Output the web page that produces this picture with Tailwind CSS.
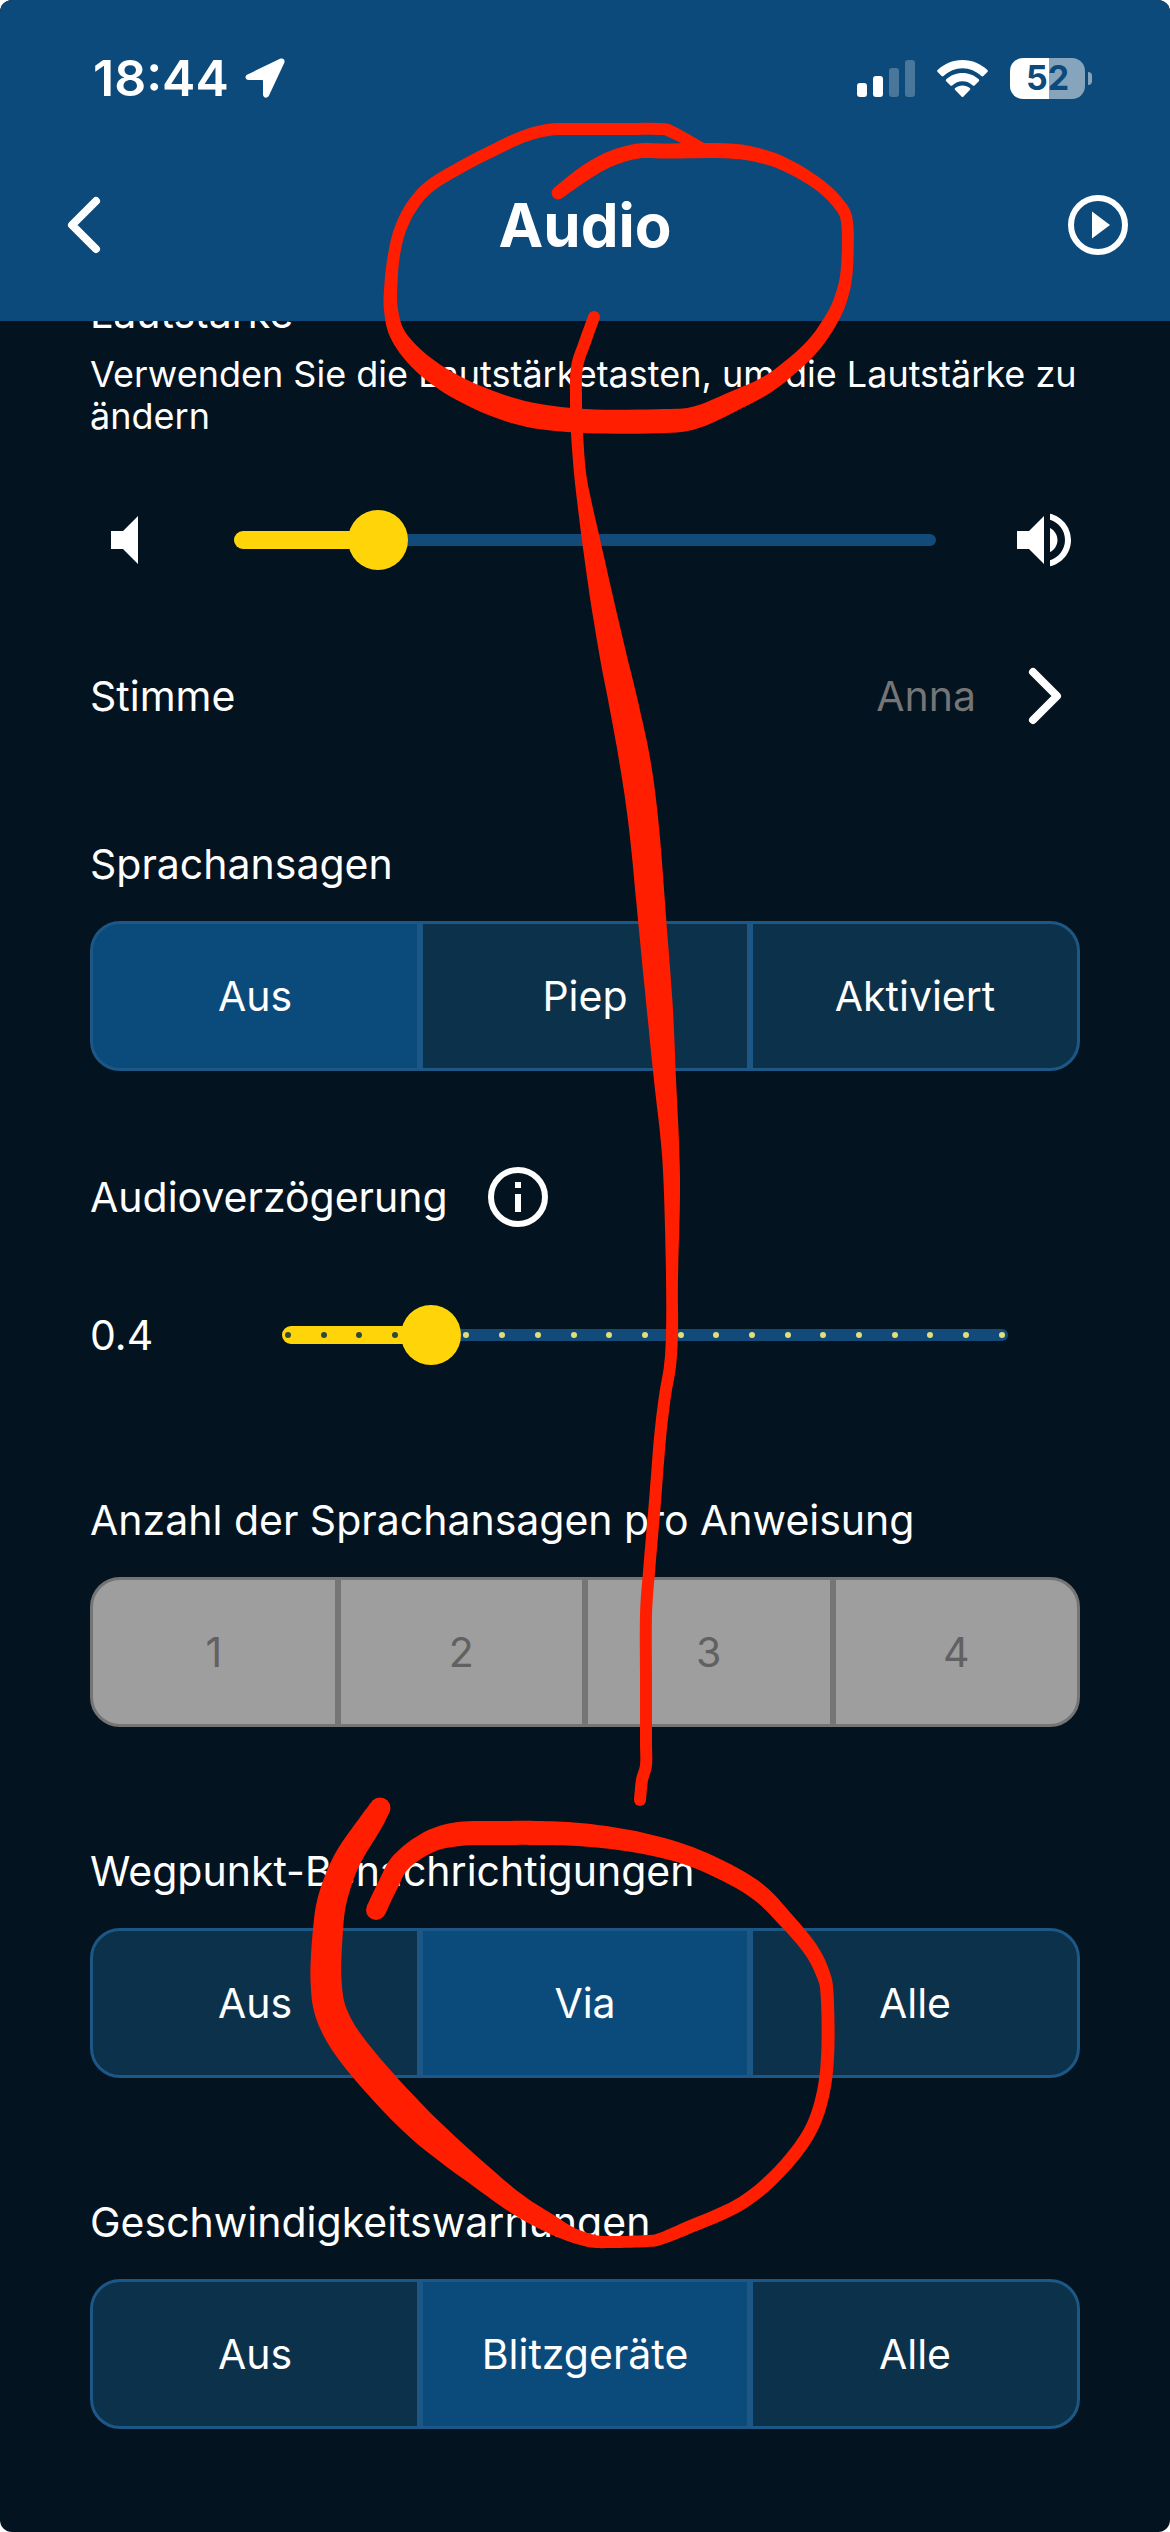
<!DOCTYPE html>
<html lang="de">
<head>
    <meta charset="UTF-8">
    <meta name="viewport" content="width=device-width, initial-scale=1.0">
    <title>Audio</title>
    <script src="https://cdn.jsdelivr.net/npm/@tailwindcss/browser@4"></script>
</head>
<body class="bg-white">
    <div class="relative min-h-screen overflow-hidden rounded-xl bg-[#03131f] font-['Inter',sans-serif] text-[41px] leading-[48px] text-white">

        <header class="relative z-10 bg-[#0b4a7a] pb-[27px]">
            <!-- Status bar -->
            <div class="flex h-[156px] items-center justify-between pr-[78px] pl-[93px]">
                <div class="flex items-center gap-4">
                    <span class="text-[50px] font-semibold">18:44</span>
                    <svg class="size-10" viewBox="0 0 40 40" fill="currentColor" aria-hidden="true">
                        <path d="M35 .8 2.500 16.500C-.8 18.200.2 22 3.800 22H17q1 0 1 1v13.500c0 3.600 4.500 4.300 6 1L39.200 5C40.600 1.800 38-.6 35 .8Z"/>
                    </svg>
                </div>
                <div class="flex items-center gap-[22px]">
                    <svg class="h-[38px] w-[58px]" viewBox="0 0 58 38" fill="currentColor" aria-hidden="true">
                        <rect x="0" y="24" width="10" height="14" rx="3"/>
                        <rect x="16" y="17" width="10" height="21" rx="3"/>
                        <rect x="32" y="9" width="10" height="29" rx="3" opacity=".25"/>
                        <rect x="48" y="1" width="10" height="37" rx="3" opacity=".25"/>
                    </svg>
                    <svg class="h-[38px] w-[51px]" viewBox="0 0 51 38" fill="currentColor" aria-hidden="true">
                        <path d="M25.500 1C35.500 1 44 5 50.400 11q.9 1 0 2l-4 4q-1 .9-2 0C39 12.200 32.600 9.300 25.500 9.300S12 12.200 6.600 17q-1 .9-2 0l-4-4q-.9-1 0-2C7 5 15.500 1 25.500 1Z"/>
                        <path d="M25.500 14c6.300 0 12 2.300 16.300 6.300q1 1 0 2l-4 4q-1 1-2 .1c-2.900-2.500-6.400-4.100-10.300-4.100s-7.400 1.600-10.300 4.100q-1 .9-2-.1l-4-4q-1-1 0-2C13.500 16.300 19.200 14 25.500 14Z"/>
                        <path d="M25.500 26.500c2.800 0 5.300.9 7.300 2.500q1 1 0 2l-6.300 6.500q-1 1-2 0L18.200 31q-1-1 0-2c2-1.600 4.500-2.500 7.300-2.500Z"/>
                    </svg>
                    <div class="flex items-center gap-[3px]">
                        <div class="flex h-[41px] w-[75px] items-center justify-center rounded-[13px] bg-linear-to-r from-white from-52% to-[#86a5bd] to-52% text-[34px] font-bold text-[#0b4a7a]">52</div>
                        <div class="h-[13px] w-1 rounded-r-full bg-[#86a5bd]"></div>
                    </div>
                </div>
            </div>

            <!-- Title bar -->
            <div class="flex h-[138px] items-center justify-between px-9">
                <button type="button" aria-label="Zurück" class="size-[72px]">
                    <svg class="size-[72px]" viewBox="0 0 72 72" fill="none" stroke="currentColor" stroke-width="8" stroke-linecap="round" stroke-linejoin="round"><path d="M60 12 36 36l24 24"/></svg>
                </button>
                <h1 class="text-[60px] leading-[72px] font-bold">Audio</h1>
                <button type="button" aria-label="Abspielen" class="size-[72px]">
                    <svg class="size-[72px]" viewBox="0 0 72 72" fill="currentColor"><circle cx="36" cy="36" r="27" fill="none" stroke="currentColor" stroke-width="6"/><path d="m30 22.500 18 13.500-18 13.500z"/></svg>
                </button>
            </div>
        </header>

        <main class="px-[90px] pb-[102px]">
            <section class="-mt-8">
                <h2 id="volume-title">Lautstärke</h2>
                <p class="mt-4 text-[36px] leading-[42px]">Verwenden Sie die Lautstärketasten, um die Lautstärke zu ändern</p>
                <div class="mt-[67px] flex h-[72px] items-center">
                    <svg class="size-[72px]" viewBox="0 0 24 24" fill="currentColor" aria-hidden="true"><path d="M7 9v6h4l5 5V4l-5 5H7z"/></svg>
                    <div class="relative mx-[72px] flex h-[60px] flex-1 items-center">
                        <div class="h-3 w-full rounded-full bg-[#124a7a]"></div>
                        <div class="absolute left-0 h-[18px] w-1/5 rounded-full bg-[#ffd509]"></div>
                        <input type="range" min="0" max="100" value="20" aria-labelledby="volume-title"
                               class="absolute -inset-x-6 h-[60px] appearance-none bg-transparent [&::-webkit-slider-thumb]:size-[60px] [&::-webkit-slider-thumb]:appearance-none [&::-webkit-slider-thumb]:rounded-full [&::-webkit-slider-thumb]:bg-[#ffd509]">
                    </div>
                    <svg class="size-[72px]" viewBox="0 0 24 24" fill="currentColor" aria-hidden="true"><path d="M3 9v6h4l5 5V4L7 9H3zm13.500 3c0-1.770-1.020-3.290-2.500-4.030v8.050c1.480-.73 2.500-2.250 2.500-4.020zM14 3.230v2.060c2.890.86 5 3.540 5 6.710s-2.110 5.850-5 6.710v2.060c4.010-.91 7-4.490 7-8.770s-2.990-7.860-7-8.770z"/></svg>
                </div>
            </section>

            <a href="#stimme" class="mt-[84px] flex h-[72px] items-center">
                <span class="flex-1">Stimme</span>
                <span class="text-[#757575]">Anna</span>
                <svg class="ml-8 size-[72px]" viewBox="0 0 72 72" fill="none" stroke="currentColor" stroke-width="8" stroke-linecap="round" stroke-linejoin="round" aria-hidden="true"><path d="m25 12 24 24-24 24"/></svg>
            </a>

            <section class="mt-[108px]">
                <h2 id="announce-title">Sprachansagen</h2>
                <div role="radiogroup" aria-labelledby="announce-title" class="mt-[33px] grid grid-cols-3">
                    <label class="flex h-[150px] items-center justify-center rounded-l-[30px] border-3 border-[#1c5786] bg-[#0c314b] has-checked:bg-[#0b4b7c]"><input type="radio" name="announce" class="sr-only" checked>Aus</label>
                    <label class="flex h-[150px] items-center justify-center border-3 border-[#1c5786] bg-[#0c314b] has-checked:bg-[#0b4b7c]"><input type="radio" name="announce" class="sr-only">Piep</label>
                    <label class="flex h-[150px] items-center justify-center rounded-r-[30px] border-3 border-[#1c5786] bg-[#0c314b] has-checked:bg-[#0b4b7c]"><input type="radio" name="announce" class="sr-only">Aktiviert</label>
                </div>
            </section>

            <section class="mt-24">
                <div class="flex h-[60px] items-center gap-10">
                    <h2 id="delay-title">Audioverzögerung</h2>
                    <button type="button" aria-label="Info">
                        <svg class="size-[60px]" viewBox="0 0 60 60" fill="currentColor"><circle cx="30" cy="30" r="27" fill="none" stroke="currentColor" stroke-width="6"/><path d="M27 15h6v6h-6zM27 27h6v18h-6z"/></svg>
                    </button>
                </div>
                <div class="mt-[78px] flex h-[60px] items-center pr-[72px]">
                    <output for="delay" class="w-48">0.4</output>
                    <div class="relative flex h-[60px] flex-1 items-center">
                        <div class="h-3 w-full rounded-full bg-[#124a7a]"></div>
                        <div class="absolute left-0 h-[18px] w-1/5 rounded-full bg-[#ffd509]"></div>
                        <div id="ticks" class="absolute inset-x-0 flex justify-between px-[3px]"></div>
                        <input id="delay" type="range" min="0" max="2" step="0.1" value="0.4" aria-labelledby="delay-title"
                               class="absolute -inset-x-6 h-[60px] appearance-none bg-transparent [&::-webkit-slider-thumb]:size-[60px] [&::-webkit-slider-thumb]:appearance-none [&::-webkit-slider-thumb]:rounded-full [&::-webkit-slider-thumb]:bg-[#ffd509]">
                    </div>
                </div>
            </section>

            <section class="mt-[131px]">
                <h2 id="count-title">Anzahl der Sprachansagen pro Anweisung</h2>
                <div role="radiogroup" aria-labelledby="count-title" class="mt-[33px] grid grid-cols-4 text-[#616161]">
                    <label class="flex h-[150px] items-center justify-center rounded-l-[30px] border-3 border-[#757575] bg-[#9e9e9e]"><input type="radio" name="count" class="sr-only" disabled>1</label>
                    <label class="flex h-[150px] items-center justify-center border-3 border-[#757575] bg-[#9e9e9e]"><input type="radio" name="count" class="sr-only" disabled>2</label>
                    <label class="flex h-[150px] items-center justify-center border-3 border-[#757575] bg-[#9e9e9e]"><input type="radio" name="count" class="sr-only" disabled>3</label>
                    <label class="flex h-[150px] items-center justify-center rounded-r-[30px] border-3 border-[#757575] bg-[#9e9e9e]"><input type="radio" name="count" class="sr-only" disabled>4</label>
                </div>
            </section>

            <section class="mt-[120px]">
                <h2 id="waypoint-title">Wegpunkt-Benachrichtigungen</h2>
                <div role="radiogroup" aria-labelledby="waypoint-title" class="mt-[33px] grid grid-cols-3">
                    <label class="flex h-[150px] items-center justify-center rounded-l-[30px] border-3 border-[#1c5786] bg-[#0c314b] has-checked:bg-[#0b4b7c]"><input type="radio" name="waypoint" class="sr-only">Aus</label>
                    <label class="flex h-[150px] items-center justify-center border-3 border-[#1c5786] bg-[#0c314b] has-checked:bg-[#0b4b7c]"><input type="radio" name="waypoint" class="sr-only" checked>Via</label>
                    <label class="flex h-[150px] items-center justify-center rounded-r-[30px] border-3 border-[#1c5786] bg-[#0c314b] has-checked:bg-[#0b4b7c]"><input type="radio" name="waypoint" class="sr-only">Alle</label>
                </div>
            </section>

            <section class="mt-[120px]">
                <h2 id="speed-title">Geschwindigkeitswarnungen</h2>
                <div role="radiogroup" aria-labelledby="speed-title" class="mt-[33px] grid grid-cols-3">
                    <label class="flex h-[150px] items-center justify-center rounded-l-[30px] border-3 border-[#1c5786] bg-[#0c314b] has-checked:bg-[#0b4b7c]"><input type="radio" name="speed" class="sr-only">Aus</label>
                    <label class="flex h-[150px] items-center justify-center border-3 border-[#1c5786] bg-[#0c314b] has-checked:bg-[#0b4b7c]"><input type="radio" name="speed" class="sr-only" checked>Blitzgeräte</label>
                    <label class="flex h-[150px] items-center justify-center rounded-r-[30px] border-3 border-[#1c5786] bg-[#0c314b] has-checked:bg-[#0b4b7c]"><input type="radio" name="speed" class="sr-only">Alle</label>
                </div>
            </section>
        </main>

        <!-- Hand-drawn marks over the page -->
        <svg id="marks" class="pointer-events-none absolute inset-x-0 top-0 z-20 w-full" viewBox="0 0 1170 2532" fill="#ff1f00" aria-hidden="true"></svg>
    </div>

    <script>
        // Slider ticks, dark on the filled part
        const ticks = document.getElementById('ticks');
        for (let i = 0; i <= 20; i++) {
            const dot = document.createElement('span');
            dot.className = i < 4 ? 'size-1.5 rounded-full bg-[#2f4a3c]' : 'size-1.5 rounded-full bg-[#e3de78]';
            ticks.appendChild(dot);
        }

        // Pen strokes: x, y, pen width
        const strokes = [
            [[558,193,13],[585,173,15],[610,159,15],[638,151,15],[665,151,15],[730,151,15],[765,157,14],[790,167,13],[818,184,12],[838,203,12],[847,222,12],[847,267,12],[842,295,13],[831,320,14],[809,350,15],[771,382,17],[734,401,20],[697,417,22],[665,421,24],[585,421,24],[522,413,25],[466,392,23],[425,366,20],[399,337,16],[391,310,14],[391,283,13],[394,255,12],[400,230,12],[412,206,12],[430,186,12],[461,167,12],[490,152,12],[522,137,12],[548,130,12],[575,129,12],[620,129,12],[660,129,12],[672,132,12],[700,147,11]],
            [[594,317,12],[585,342,12],[577,367,12],[576,400,12],[577,433,12],[580,473,12],[584,500,14],[591,540,18],[602,600,23],[614,660,27],[623,701,29],[635,762,31],[644,828,30],[653,930,28],[660,1011,26],[665,1080,22],[670,1143,18],[672,1194,16],[672,1278,12],[672,1333,12],[670,1366,12],[665,1396,12],[660,1438,12],[655,1501,12],[649,1572,12],[646,1615,12],[646,1680,12],[646,1740,12],[646,1765,12],[642,1780,12],[640,1800,12]],
            [[380,1808,21],[370,1824,24],[347,1860,27],[333,1897,29],[328,1930,30],[326,1980,31],[333,2018,32],[360,2060,33],[420,2125,32],[488,2182,24],[520,2206,21],[547,2222,19],[570,2234,15],[592,2241,13],[612,2242,12],[647,2241,12],[660,2239,12],[687,2228,13],[737,2206,13],[771,2180,13],[800,2147,13],[816,2118,13],[825,2083,13],[828,2043,13],[827,1993,13],[823,1974,14],[811,1950,15],[786,1920,16],[753,1888,18],[697,1859,19],[641,1843,21],[585,1835,23],[541,1833,24],[500,1833,24],[459,1834,24],[429,1842,22],[401,1862,20],[388,1885,20],[376,1910,20]]
        ];

        function spline(a, b, c, d, t) {
            return 0.5 * (2 * b + (c - a) * t + (2 * a - 5 * b + 4 * c - d) * t * t + (3 * b - a - 3 * c + d) * t * t * t);
        }

        function outline(points) {
            const line = [];
            for (let i = 0; i < points.length - 1; i++) {
                const p = [points[Math.max(i - 1, 0)], points[i], points[i + 1], points[Math.min(i + 2, points.length - 1)]];
                for (let t = 0; t < 1; t += 0.125) {
                    line.push([0, 1, 2].map(k => spline(p[0][k], p[1][k], p[2][k], p[3][k], t)));
                }
            }
            line.push(points[points.length - 1]);
            const left = [];
            const right = [];
            line.forEach(([x, y, w], i) => {
                const prev = line[Math.max(i - 1, 0)];
                const next = line[Math.min(i + 1, line.length - 1)];
                const dx = next[0] - prev[0];
                const dy = next[1] - prev[1];
                const half = w / 2 / Math.hypot(dx, dy);
                left.push(`${(x - dy * half).toFixed(1)} ${(y + dx * half).toFixed(1)}`);
                right.unshift(`${(x + dy * half).toFixed(1)} ${(y - dx * half).toFixed(1)}`);
            });
            return `M${left.concat(right).join('L')}Z`;
        }

        document.getElementById('marks').innerHTML = strokes.map(points => {
            const ends = [points[0], points[points.length - 1]];
            return `<path d="${outline(points)}"/>` + ends.map(([x, y, w]) => `<circle cx="${x}" cy="${y}" r="${w / 2}"/>`).join('');
        }).join('');
    </script>
</body>
</html>
